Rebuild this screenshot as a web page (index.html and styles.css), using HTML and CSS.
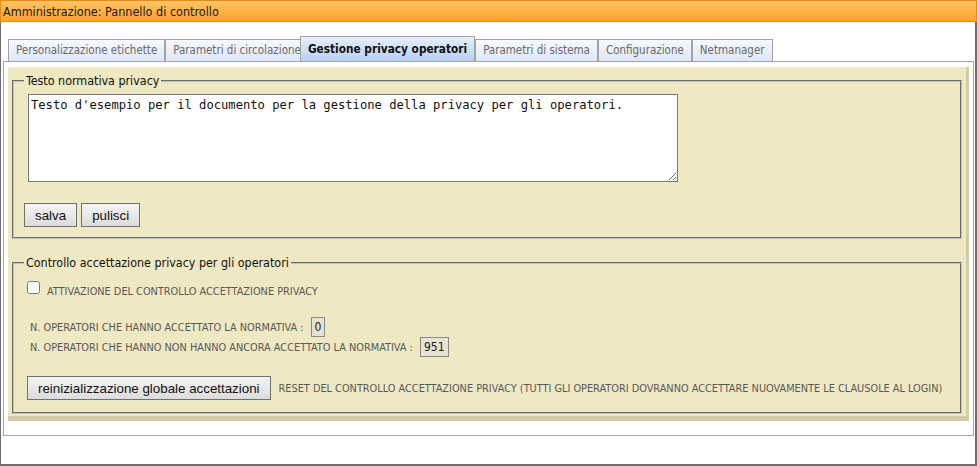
FILE: index.html
```html
<!DOCTYPE html>
<html lang="it">
<head>
<meta charset="utf-8">
<title>Amministrazione: Pannello di controllo</title>
<link rel="stylesheet" href="styles.css">
</head>
<body>
<div class="window">
  <div class="titlebar">Amministrazione: Pannello di controllo</div>
  <div class="body">
    <ul class="tabs">
      <li class="tab">Personalizzazione etichette</li>
      <li class="tab">Parametri di circolazione</li>
      <li class="tab tab-active">Gestione privacy operatori</li>
      <li class="tab">Parametri di sistema</li>
      <li class="tab">Configurazione</li>
      <li class="tab">Netmanager</li>
    </ul>
    <div class="panel">
      <div class="pane">
        <fieldset class="group group-text">
          <legend class="group-title">Testo normativa privacy</legend>
          <textarea class="privacy-text">Testo d'esempio per il documento per la gestione della privacy per gli operatori.</textarea>
          <div class="actions">
            <button class="btn">salva</button>
            <button class="btn">pulisci</button>
          </div>
        </fieldset>
        <fieldset class="group group-control">
          <legend class="group-title">Controllo accettazione privacy per gli operatori</legend>
          <div class="check-row">
            <input type="checkbox" class="check" id="attiva">
            <label class="caps-label check-label" for="attiva">ATTIVAZIONE DEL CONTROLLO ACCETTAZIONE PRIVACY</label>
          </div>
          <div class="stats">
            <div class="stat-row">
              <span class="caps-label">N. OPERATORI CHE HANNO ACCETTATO LA NORMATIVA :</span>
              <span class="stat-value">0</span>
            </div>
            <div class="stat-row">
              <span class="caps-label">N. OPERATORI CHE HANNO NON HANNO ANCORA ACCETTATO LA NORMATIVA :</span>
              <span class="stat-value">951</span>
            </div>
          </div>
          <div class="reset-row">
            <button class="btn">reinizializzazione globale accettazioni</button>
            <span class="caps-label reset-note">RESET DEL CONTROLLO ACCETTAZIONE PRIVACY (TUTTI GLI OPERATORI DOVRANNO ACCETTARE NUOVAMENTE LE CLAUSOLE AL LOGIN)</span>
          </div>
        </fieldset>
      </div>
    </div>
  </div>
</div>
</body>
</html>
```
FILE: styles.css
```css
html, body {
  margin: 0;
  padding: 0;
  background: #ffffff;
}

body {
  font-family: "DejaVu Sans Condensed", "Liberation Sans", sans-serif;
  font-stretch: condensed;
  color: #1a1a1a;
}

.window {
  width: 977px;
  height: 466px;
  display: flex;
  flex-direction: column;
}

.titlebar {
  box-sizing: border-box;
  height: 22px;
  padding: 1px 2px 0 2px;
  border: 1px solid #e48b1c;
  background: linear-gradient(#ffc466, #ffa22a);
  font-size: 12.5px;
  line-height: 19px;
  color: #1a1a1a;
  white-space: nowrap;
}

.body {
  flex: 1;
  box-sizing: border-box;
  border-left: 1px solid #6e6e6e;
  border-right: 2px solid #6e6e6e;
  border-bottom: 2px solid #6e6e6e;
  padding: 14px 1px 0 2px;
}

.tabs {
  list-style: none;
  margin: 0 0 0 5px;
  padding: 0;
  display: flex;
  align-items: flex-end;
  height: 25px;
}

.tab {
  box-sizing: border-box;
  height: 22px;
  padding: 0 7px;
  border: 1px solid #a3a3a3;
  border-bottom: none;
  background: linear-gradient(#f7f9fe, #dde6f6);
  font-size: 11.5px;
  line-height: 21px;
  color: #6a6a6a;
  white-space: nowrap;
}

.tab-active {
  position: relative;
  height: 25px;
  margin-left: -9px;
  padding: 0 7px;
  background: linear-gradient(#e6effd, #b8cff3);
  font-size: 11.75px;
  font-weight: bold;
  line-height: 24px;
  color: #111111;
}

.panel {
  border: 1px solid #a5a5a5;
  padding: 5px 4px 14px 4px;
}

.pane {
  background: #eee8c3;
  border-right: 3px solid #d2cca6;
  border-bottom: 5px solid #d2cca6;
  padding: 7px 4px 2px 4px;
}

.group {
  margin: 0;
  min-width: 0;
  border: 2px groove #c0c0c0;
  padding: 6px 10px 10px 10px;
}

.group-control {
  margin-top: 17px;
  padding-top: 11px;
  padding-bottom: 12px;
}

.group-title {
  padding: 0 2px;
  font-size: 12.4px;
  line-height: 14px;
  color: #111111;
}

.privacy-text {
  display: block;
  box-sizing: border-box;
  width: 650px;
  height: 88px;
  margin: 0 0 0 4px;
  padding: 3px 2px;
  border: 1px solid #767676;
  background: #ffffff;
  font-family: "DejaVu Sans Mono", monospace;
  font-size: 12.15px;
  line-height: 14px;
  color: #111111;
}

.actions {
  display: flex;
  gap: 4px;
  margin-top: 21px;
}

.btn {
  box-sizing: border-box;
  height: 24px;
  margin: 0;
  padding: 0 10px;
  border: 1px solid #707070;
  border-radius: 0;
  background: linear-gradient(#f4f4f4, #dcdcdc);
  font-family: "Liberation Sans", Arial, sans-serif;
  font-size: 13.33px;
  color: #111111;
}

.caps-label {
  font-size: 10.85px;
  color: #585858;
  white-space: nowrap;
}

.check-row {
  display: flex;
  align-items: flex-start;
}

.check {
  width: 13px;
  height: 13px;
  margin: 0 0 0 3px;
}

.check-label {
  margin: 4px 0 0 7px;
  line-height: 13px;
}

.stats {
  margin-top: 19px;
  padding-left: 6px;
}

.stat-row {
  display: flex;
  align-items: center;
  gap: 7px;
  height: 20px;
}

.stat-value {
  box-sizing: border-box;
  height: 20px;
  padding: 0 3px;
  border: 1px solid #8a8a8a;
  background: #e6e3d3;
  font-size: 12px;
  line-height: 18px;
  color: #1a1a1a;
}

.reset-row {
  display: flex;
  align-items: center;
  gap: 8px;
  margin-top: 19px;
  padding-left: 3px;
}
```
